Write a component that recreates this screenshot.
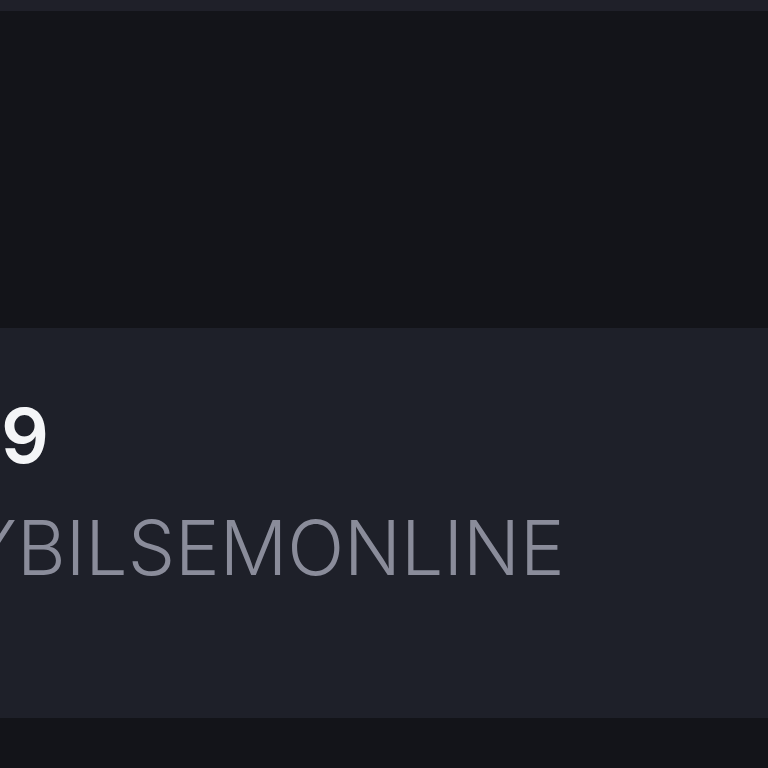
import React from "react";

function App() {
  return (
    <div className="w-[768px] h-[768px] overflow-hidden bg-[#131419] font-['Inter',sans-serif]">
      <div className="h-[11px] bg-[#1f2029]"></div>
      <div className="h-[317px] bg-[#131419]"></div>
      <div className="h-[390px] bg-[#1e2029] pt-[70px] overflow-hidden">
        <div className="text-[75px] leading-none font-semibold text-[#f4f5f7] whitespace-nowrap pl-[1px]">
          9
        </div>
        <div className="mt-[37px] -ml-[33px] text-[75px] leading-none font-light text-[#8a8c9a] whitespace-nowrap">
          YBILSEMONLINE
        </div>
      </div>
      <div className="h-[50px] bg-[#131419]"></div>
    </div>
  );
}

export default App;
